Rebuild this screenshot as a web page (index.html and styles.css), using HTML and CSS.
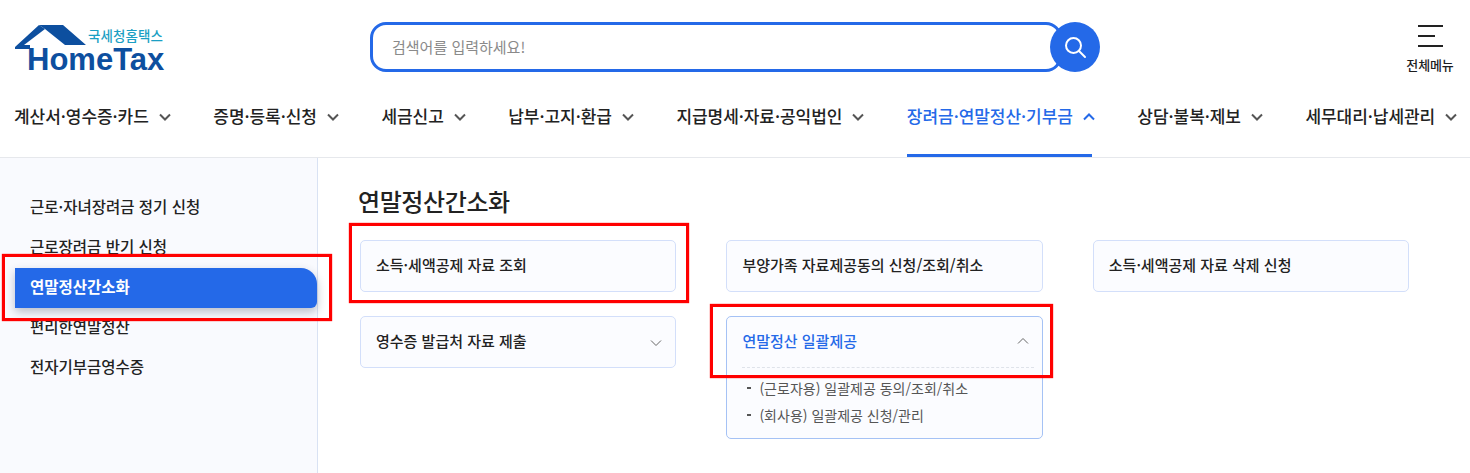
FILE: index.html
```html
<!DOCTYPE html>
<html lang="ko">
<head>
<meta charset="utf-8">
<title>국세청 홈택스</title>
<link rel="stylesheet" href="styles.css">
</head>
<body>
<header class="header">
  <div class="top">
    <a class="logo">
      <svg class="logo-house" width="80" height="55" viewBox="0 0 80 55">
        <path class="roof-dark" d="M29 5 H53 L76 25 H55 L35 9 Z"/>
        <path class="roof-dark" d="M5 27 L29 5 L35 9 L14 25 H20 V29 H5 Z"/>
      </svg>
      <span class="logo-ko">국세청홈택스</span>
      <span class="logo-en">HomeTax</span>
    </a>
    <div class="search">
      <div class="search-box">검색어를 입력하세요!</div>
      <button class="search-btn" aria-label="검색">
        <svg width="24" height="24" viewBox="0 0 24 24" fill="none" stroke="#fff" stroke-width="2"><circle cx="10.5" cy="10.5" r="7.5"/><path d="M16 16 L22 22" stroke-linecap="round"/></svg>
      </button>
    </div>
    <div class="allmenu">
      <div class="burger"><i></i><i class="short"></i><i></i></div>
      <span>전체메뉴</span>
    </div>
  </div>
  <nav class="gnb">
    <a class="gnb-item">계산서·영수증·카드<svg class="chev" viewBox="0 0 12 8"><path d="M1 1.5 L6 6.5 L11 1.5"/></svg></a>
    <a class="gnb-item">증명·등록·신청<svg class="chev" viewBox="0 0 12 8"><path d="M1 1.5 L6 6.5 L11 1.5"/></svg></a>
    <a class="gnb-item">세금신고<svg class="chev" viewBox="0 0 12 8"><path d="M1 1.5 L6 6.5 L11 1.5"/></svg></a>
    <a class="gnb-item">납부·고지·환급<svg class="chev" viewBox="0 0 12 8"><path d="M1 1.5 L6 6.5 L11 1.5"/></svg></a>
    <a class="gnb-item">지급명세·자료·공익법인<svg class="chev" viewBox="0 0 12 8"><path d="M1 1.5 L6 6.5 L11 1.5"/></svg></a>
    <a class="gnb-item active">장려금·연말정산·기부금<svg class="chev" viewBox="0 0 12 8"><path d="M1 6.5 L6 1.5 L11 6.5"/></svg></a>
    <a class="gnb-item">상담·불복·제보<svg class="chev" viewBox="0 0 12 8"><path d="M1 1.5 L6 6.5 L11 1.5"/></svg></a>
    <a class="gnb-item">세무대리·납세관리<svg class="chev" viewBox="0 0 12 8"><path d="M1 1.5 L6 6.5 L11 1.5"/></svg></a>
  </nav>
</header>
<div class="body">
  <aside class="side">
    <a class="side-item">근로·자녀장려금 정기 신청</a>
    <a class="side-item">근로장려금 반기 신청</a>
    <a class="side-item current">연말정산간소화</a>
    <a class="side-item">편리한연말정산</a>
    <a class="side-item">전자기부금영수증</a>
  </aside>
  <main class="main">
    <h1 class="title">연말정산간소화</h1>
    <div class="cards">
      <div class="card"><div class="card-head">소득·세액공제 자료 조회</div></div>
      <div class="card"><div class="card-head">부양가족 자료제공동의 신청/조회/취소</div></div>
      <div class="card"><div class="card-head">소득·세액공제 자료 삭제 신청</div></div>
      <div class="card"><div class="card-head">영수증 발급처 자료 제출<svg class="thin" viewBox="0 0 12 8"><path d="M1 1.5 L6 6.5 L11 1.5"/></svg></div></div>
      <div class="card open">
        <div class="card-head">연말정산 일괄제공<svg class="thin" viewBox="0 0 12 8"><path d="M1 6.5 L6 1.5 L11 6.5"/></svg></div>
        <ul class="sub">
          <li>(근로자용) 일괄제공 동의/조회/취소</li>
          <li>(회사용) 일괄제공 신청/관리</li>
        </ul>
      </div>
    </div>
  </main>
</div>
<div class="mark mark-side"></div>
<div class="mark mark-card1"></div>
<div class="mark mark-card2"></div>
</body>
</html>
```
FILE: styles.css
```css
* { box-sizing: border-box; }
html, body { margin: 0; padding: 0; }
body {
  width: 1470px;
  height: 473px;
  overflow: hidden;
  position: relative;
  background: #fff;
  color: #1d1d1f;
  font-family: "Noto Sans CJK KR", "Noto Sans", sans-serif;
}
.header { height: 158px; border-bottom: 1px solid #e6e8ec; }
.top { height: 94px; display: flex; }
.logo { position: relative; display: block; width: 370px; height: 94px; flex: none; }
.logo-house { position: absolute; left: 10px; top: 20px; }
.roof-dark { fill: #0d4f9f; }
.logo-ko {
  position: absolute; left: 88px; top: 27px;
  font-size: 13.5px; line-height: 16px; font-weight: 500;
  color: #1b9fc4; letter-spacing: 0.1px; white-space: nowrap;
}
.logo-en {
  position: absolute; left: 27px; top: 47px;
  font-family: "Liberation Sans", sans-serif;
  font-size: 31px; line-height: 26px; font-weight: 700;
  color: #0d4f9f; letter-spacing: 0;
}
.search { display: flex; align-items: center; height: 50px; margin-top: 22px; width: 730px; flex: none; }
.search-box {
  width: 692px; height: 50px;
  border: 3px solid #2469e8; border-radius: 16px;
  padding-left: 19px;
  font-size: 15px; line-height: 44px; color: #8a8a8a;
}
.search-btn {
  width: 50px; height: 50px; border: 0; border-radius: 50%;
  background: #2469e8; margin-left: -12px; padding: 0;
  display: flex; align-items: center; justify-content: center;
  position: relative;
}
.allmenu {
  margin-left: auto; width: 64px; margin-right: 8px;
  padding-top: 25px; display: flex; flex-direction: column; align-items: center;
  font-size: 13px; font-weight: 500; letter-spacing: -0.1px;
}
.allmenu span { line-height: 18px; margin-top: 9px; white-space: nowrap; }
.burger { width: 25px; height: 22px; display: flex; flex-direction: column; justify-content: space-between; align-items: flex-start; }
.burger i { display: block; width: 25px; height: 2px; background: #222; }
.burger i.short { width: 17px; }
.gnb { display: flex; height: 63px; padding-left: 14px; gap: 42.5px; white-space: nowrap; }
.gnb-item {
  display: flex; align-items: flex-start; gap: 10px; height: 63px;
  font-size: 17px; font-weight: 500; line-height: 44px; letter-spacing: -0.05px;
  color: #222;
  position: relative;
}
.gnb-item.active { color: #2469e8; }
.gnb-item.active::after {
  content: ""; position: absolute; left: 0; bottom: 0; width: 185px; height: 3px; background: #2469e8;
}
.chev { width: 12px; height: 8px; margin-top: 19px; fill: none; stroke: #555; stroke-width: 2; }
.active .chev { stroke: #2469e8; }
.body { display: flex; height: 315px; }
.side {
  width: 318px; flex: none; padding: 30px 0 0 15px;
  background: #f9fafe; border-right: 1px solid #d9e2f3;
}
.side-item {
  display: block; height: 40px; padding-left: 15px;
  font-size: 15.5px; font-weight: 500; line-height: 36px; color: #222;
}
.side-item.current {
  background: #2469e8; color: #fff; font-weight: 700;
  border-radius: 0 16px 6px 0;
  box-shadow: 0 4px 10px rgba(40, 50, 80, .3);
}
.main { flex: 1; padding: 28px 0 0 40px; }
.title { margin: 0 0 24px; font-size: 24px; font-weight: 500; line-height: 30px; letter-spacing: -0.4px; color: #222; }
.cards {
  display: grid; grid-template-columns: repeat(3, 316.4px); column-gap: 50px; row-gap: 24px;
  align-items: start; margin-left: 2px;
}
.card {
  background: #fbfcff; border: 1px solid #d3dffa; border-radius: 5px;
}
.card-head {
  height: 50px; display: flex; align-items: center; justify-content: space-between;
  padding: 0 13px 3px 15px;
  font-size: 15px; font-weight: 500; color: #222;
}
.thin { width: 12px; height: 8px; fill: none; stroke: #666; stroke-width: 1; margin-top: 5px; }
.open { border-color: #a5c2f5; }
.open .card-head { color: #2469e8; }
.open .thin { margin-top: 1px; }
.sub {
  list-style: none; margin: 0 8px 0 15px; padding: 7px 0 9px 0;
  border-top: 1px dashed #dfe3ea;
  font-size: 14px; line-height: 27px; color: #555;
}
.sub li { padding-left: 17px; position: relative; }
.sub li::before {
  content: ""; position: absolute; left: 5px; top: 12px; width: 4px; height: 2px; background: #555;
}
.mark { position: absolute; border: 3px solid #f00; box-shadow: 0 0 1px #f00; }
.mark-side { left: 2px; top: 254px; width: 330px; height: 67px; }
.mark-card1 { left: 349px; top: 223px; width: 340px; height: 80px; }
.mark-card2 { left: 710px; top: 304px; width: 343px; height: 74px; }
```
